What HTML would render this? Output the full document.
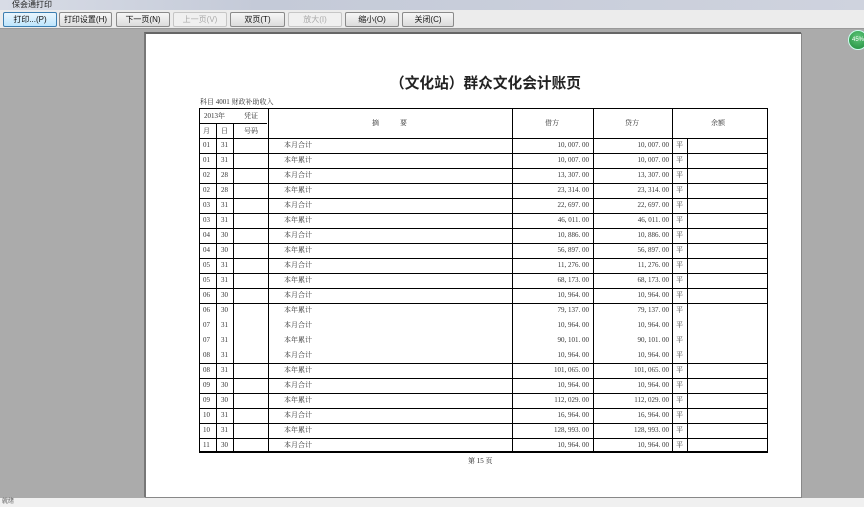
<!DOCTYPE html>
<html><head><meta charset="utf-8"><style>
*{margin:0;padding:0;box-sizing:border-box}
body{width:864px;height:507px;overflow:hidden;background:#ababab;font-family:"Liberation Serif","Noto Serif CJK SC","Noto Sans CJK SC",serif;position:relative}
.title{position:absolute;left:0;top:0;width:864px;height:10px;background:linear-gradient(90deg,#d8dce6,#c4cad8 30%,#cfd3de);font-size:8px;line-height:10px;padding-left:12px;font-family:"Liberation Sans","Noto Sans CJK SC",sans-serif;color:#222}
.tb{position:absolute;left:0;top:10px;width:864px;height:19px;background:#ececec;border-bottom:1px solid #999}
.btn{position:absolute;top:2px;height:15px;border:1px solid #8a8a8a;border-radius:2px;background:linear-gradient(#f6f6f6,#dcdcdc);font-size:8px;line-height:13px;text-align:center;font-family:"Liberation Sans","Noto Sans CJK SC",sans-serif;color:#111}
.btn.d{color:#aaa;border-color:#c6c6c6;background:#f0f0f0}
.btn.f{border-color:#3c7fb1;background:linear-gradient(#eaf6fd,#bee6fd)}
.page{position:absolute;left:144px;top:32px;width:657px;height:465px;background:#fff;border-top:2px solid #666;border-left:2px solid #777;box-shadow:1px 1px 0 #888}
.h1{position:absolute;left:390px;top:72px;font-size:14.7px;font-weight:bold;font-family:"Liberation Sans","Noto Sans CJK SC",sans-serif;color:#222;white-space:nowrap}
.sub{position:absolute;left:200px;top:97px;font-size:7px;color:#333}
.t{position:absolute;left:199px;top:108px;width:569px;height:345px;border:1px solid #000;border-bottom:2px solid #000}
.v{position:absolute;top:0;bottom:0;border-left:1px solid #000}
.h{position:absolute;left:0;right:0;border-top:1px solid #000}
.c{position:absolute;font-size:7px;color:#333;white-space:pre;line-height:15px}
.pn{position:absolute;left:468px;top:456px;font-size:7px;color:#222}
.badge{position:absolute;left:848px;top:30px;width:20px;height:20px;border-radius:50%;background:radial-gradient(circle at 50% 35%,#5fc77b,#1e8a3a);border:1px solid #cfe;color:#fff;font-size:6px;line-height:18px;padding-left:3px;font-family:"Liberation Sans",sans-serif}
.status{position:absolute;left:0;top:498px;width:864px;height:9px;background:#f0f0f0;font-size:6px;line-height:9px;padding-left:2px;color:#333}
</style></head><body>
<div class="title">保会通打印</div>
<div class="tb">
<div class="btn f" style="left:3px;width:54px">打印...(P)</div>
<div class="btn" style="left:59px;width:53px">打印设置(H)</div>
<div class="btn" style="left:116px;width:54px">下一页(N)</div>
<div class="btn d" style="left:173px;width:54px">上一页(V)</div>
<div class="btn" style="left:230px;width:55px">双页(T)</div>
<div class="btn d" style="left:288px;width:54px">放大(I)</div>
<div class="btn" style="left:345px;width:54px">缩小(O)</div>
<div class="btn" style="left:402px;width:52px">关闭(C)</div>
</div>
<div class="page"></div>
<div class="badge">45%</div>
<div class="h1">（文化站）群众文化会计账页</div>
<div class="sub">科目 4001 财政补助收入</div>
<div class="t" id="t">
<div class="v" style="left:16px;top:15px"></div>
<div class="v" style="left:33px;top:15px"></div>
<div class="v" style="left:68px"></div>
<div class="v" style="left:312px"></div>
<div class="v" style="left:393px"></div>
<div class="v" style="left:472px"></div>
<div class="v" style="left:487px;top:29px"></div>
<div class="h" style="left:0;right:500px;top:14px"></div>
<div class="h" style="top:29px"></div>
<div class="c" style="left:4px;top:0">2013年</div>
<div class="c" style="left:3px;top:15px">月</div>
<div class="c" style="left:21px;top:15px">日</div>
<div class="c" style="left:44px;top:0">凭证</div>
<div class="c" style="left:44px;top:15px">号码</div>
<div class="c" style="left:172px;top:7px">摘            要</div>
<div class="c" style="left:345px;top:7px">借方</div>
<div class="c" style="left:425px;top:7px">贷方</div>
<div class="c" style="left:511px;top:7px">余额</div>
</div>
<div class="pn">第 15 页</div>
<div class="status">就绪</div>
<script>
var rows=[["01","31","本月合计","10,007.00"],["01","31","本年累计","10,007.00"],["02","28","本月合计","13,307.00"],["02","28","本年累计","23,314.00"],["03","31","本月合计","22,697.00"],["03","31","本年累计","46,011.00"],["04","30","本月合计","10,886.00"],["04","30","本年累计","56,897.00"],["05","31","本月合计","11,276.00"],["05","31","本年累计","68,173.00"],["06","30","本月合计","10,964.00"],["06","30","本年累计","79,137.00"],["07","31","本月合计","10,964.00"],["07","31","本年累计","90,101.00"],["08","31","本月合计","10,964.00"],["08","31","本年累计","101,065.00"],["09","30","本月合计","10,964.00"],["09","30","本年累计","112,029.00"],["10","31","本月合计","16,964.00"],["10","31","本年累计","128,993.00"],["11","30","本月合计","10,964.00"]];
var t=document.getElementById('t'),h='';
rows.forEach(function(r,i){var y=29+i*15;var n=r[3].replace(',',', ').replace('.','. ');
if(i>0&&!(i>=12&&i<=14))h+='<div class="h" style="top:'+y+'px"></div>';
h+='<div class="c" style="left:3px;top:'+y+'px">'+r[0]+'</div><div class="c" style="left:21px;top:'+y+'px">'+r[1]+'</div><div class="c" style="left:84px;top:'+y+'px">'+r[2]+'</div><div class="c" style="right:178px;top:'+y+'px">'+n+'</div><div class="c" style="right:98px;top:'+y+'px">'+n+'</div><div class="c" style="left:476px;top:'+y+'px">平</div>';});
t.insertAdjacentHTML('beforeend',h);
</script>
</body></html>
